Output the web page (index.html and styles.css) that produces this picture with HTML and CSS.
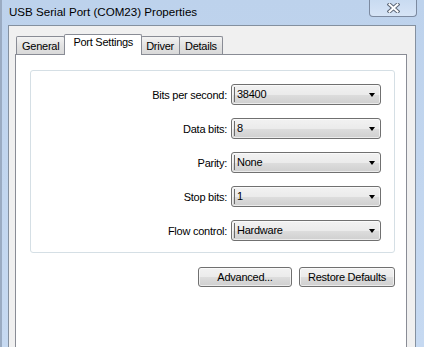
FILE: index.html
```html
<!DOCTYPE html>
<html lang="en">
<head>
<meta charset="UTF-8">
<title>USB Serial Port (COM23) Properties</title>
<link rel="stylesheet" href="styles.css">
</head>
<body>
<div class="window">
    <div class="titlebar">
        <span class="title">USB Serial Port (COM23) Properties</span>
        <div class="close-btn">
            <svg width="13" height="10" viewBox="0 0 13 10">
                <path d="M2.5 1.5 L10.5 8.5 M10.5 1.5 L2.5 8.5" stroke="#5d6878" stroke-width="4" stroke-linecap="square"/>
                <path d="M2.5 1.5 L10.5 8.5 M10.5 1.5 L2.5 8.5" stroke="#ffffff" stroke-width="2" stroke-linecap="square"/>
            </svg>
        </div>
    </div>

    <div class="client">
        <div class="tabs">
            <div class="tab">General</div>
            <div class="tab active">Port Settings</div>
            <div class="tab">Driver</div>
            <div class="tab">Details</div>
        </div>

        <div class="panel">
            <div class="group">
                <label class="field-label">Bits per second:</label>
                <div class="combo"><span class="combo-value">38400</span><span class="arrow"></span></div>

                <label class="field-label">Data bits:</label>
                <div class="combo"><span class="combo-value">8</span><span class="arrow"></span></div>

                <label class="field-label">Parity:</label>
                <div class="combo"><span class="combo-value">None</span><span class="arrow"></span></div>

                <label class="field-label">Stop bits:</label>
                <div class="combo"><span class="combo-value">1</span><span class="arrow"></span></div>

                <label class="field-label">Flow control:</label>
                <div class="combo"><span class="combo-value">Hardware</span><span class="arrow"></span></div>
            </div>

            <div class="button-row">
                <button class="btn btn-advanced">Advanced...</button>
                <button class="btn btn-restore">Restore Defaults</button>
            </div>
        </div>
    </div>
</div>
</body>
</html>
```

FILE: styles.css
```css
body {
    margin: 0;
    width: 424px;
    height: 347px;
    overflow: hidden;
    background-color: #c3d6ef;
    font-family: "Liberation Sans", Arial, sans-serif;
    font-size: 11px;
    letter-spacing: -0.25px;
    color: #000;
}

.window {
    display: flex;
    flex-direction: column;
    height: 347px;
    border-left: 2px solid #9aabc2;
    background: linear-gradient(#bdd2ec, #c6d9f1);
    box-sizing: border-box;
}

/* title bar */
.titlebar {
    height: 25px;
    display: flex;
    justify-content: space-between;
    align-items: flex-start;
}

.title {
    font-size: 11.6px;
    letter-spacing: 0;
    padding-left: 7px;
    padding-top: 5px;
}

.close-btn {
    width: 46px;
    height: 16px;
    margin-right: 7px;
    border: 1px solid #7c8aa0;
    border-top: none;
    border-radius: 0 0 4px 4px;
    background: linear-gradient(#c9dbf1, #d6e4f6);
    display: flex;
    justify-content: center;
    align-items: center;
}

/* client area */
.client {
    flex: 1;
    display: flex;
    flex-direction: column;
    margin: 0 8px 0 6px;
    border: 1px solid #84909f;
    border-bottom: none;
    background-color: #f0f0f0;
    padding: 8px 8px 0 6px;
}

.tabs {
    display: flex;
    align-items: flex-end;
    padding-left: 1px;
}

.tab {
    box-sizing: border-box;
    height: 18px;
    padding: 3px 5px 0 5px;
    line-height: 13px;
    border: 1px solid #898c95;
    border-bottom: none;
    border-radius: 2px 2px 0 0;
    background: linear-gradient(#f3f3f3, #e3e3e3 50%, #d9d9d9);
    margin-right: -1px;
}

.tab.active {
    height: 21px;
    padding: 1px 8px 0 8px;
    margin-bottom: -1px;
    background: #fff;
    position: relative;
    z-index: 1;
}

.tab.active + .tab {
    border-left: none;
}

.panel {
    flex: 1;
    background-color: #fff;
    border: 1px solid #898c95;
    border-bottom: none;
    padding: 15px 11px 0 14px;
}

.group {
    display: grid;
    grid-template-columns: 1fr 150px;
    column-gap: 4px;
    row-gap: 13px;
    padding: 13px 13px 11px 0;
    border: 1px solid #d5dfe5;
    border-radius: 3px;
}

.field-label {
    text-align: right;
    align-self: center;
}

.combo {
    box-sizing: border-box;
    height: 21px;
    border: 1px solid #707070;
    border-radius: 3px;
    background: linear-gradient(#f2f2f2, #ebebeb 50%, #dddddd 51%, #cfcfcf);
    box-shadow: inset 0 0 0 1px rgba(255, 255, 255, 0.6);
    display: flex;
    align-items: center;
    padding: 0 5px 0 2px;
}

.combo-value {
    flex: 1;
    border-left: 1px solid #6a6a6a;
    padding-left: 2px;
    height: 15px;
    line-height: 15px;
}

.arrow {
    width: 0;
    height: 0;
    border-left: 3.5px solid transparent;
    border-right: 3.5px solid transparent;
    border-top: 4px solid #000;
}

.button-row {
    display: flex;
    justify-content: flex-end;
    gap: 7px;
    margin-top: 14px;
}

.btn {
    box-sizing: border-box;
    height: 20px;
    font-family: inherit;
    font-size: 11px;
    letter-spacing: -0.25px;
    border: 1px solid #707070;
    border-radius: 3px;
    background: linear-gradient(#f2f2f2, #ebebeb 50%, #dddddd 51%, #cfcfcf);
    box-shadow: inset 0 0 0 1px rgba(255, 255, 255, 0.6);
    padding: 0;
    color: #000;
}

.btn-advanced {
    width: 94px;
}

.btn-restore {
    width: 96px;
}
```
